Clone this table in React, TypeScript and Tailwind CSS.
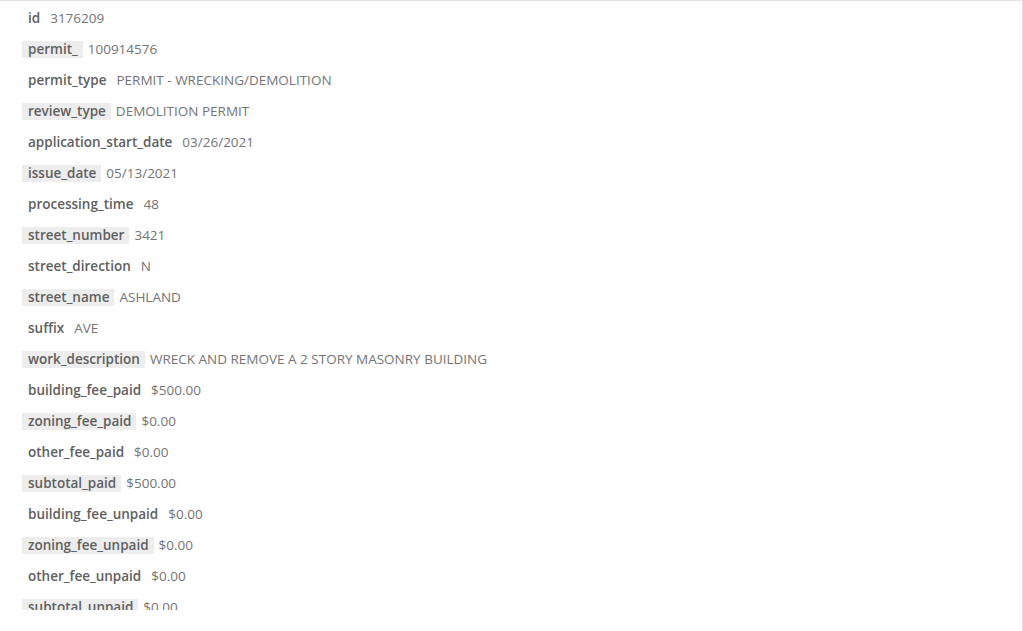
import React from "react";

const rows: [string, string][] = [
  ["id", "3176209"],
  ["permit_", "100914576"],
  ["permit_type", "PERMIT - WRECKING/DEMOLITION"],
  ["review_type", "DEMOLITION PERMIT"],
  ["application_start_date", "03/26/2021"],
  ["issue_date", "05/13/2021"],
  ["processing_time", "48"],
  ["street_number", "3421"],
  ["street_direction", "N"],
  ["street_name", "ASHLAND"],
  ["suffix", "AVE"],
  ["work_description", "WRECK AND REMOVE A 2 STORY MASONRY BUILDING"],
  ["building_fee_paid", "$500.00"],
  ["zoning_fee_paid", "$0.00"],
  ["other_fee_paid", "$0.00"],
  ["subtotal_paid", "$500.00"],
  ["building_fee_unpaid", "$0.00"],
  ["zoning_fee_unpaid", "$0.00"],
  ["other_fee_unpaid", "$0.00"],
  ["subtotal_unpaid", "$0.00"],
];

export default function App() {
  return (
    <div
      className="w-[1023px] h-[631px] bg-white border-t border-r border-[#e3e3e3] overflow-hidden"
      style={{ fontFamily: '"Open Sans", "Noto Sans", sans-serif' }}
    >
      <div className="h-[609px] overflow-hidden pl-[22px] pt-[2px]">
        {rows.map(([k, v], i) => (
          <div key={k} className="h-[31px] flex items-center text-[13.5px] leading-[17px]">
            <span
              className={
                "pl-[6px] pr-[5px] h-[17px] flex items-center font-semibold text-[#606060] " +
                (i % 2 === 1 ? "bg-[#ededed]" : "")
              }
            >
              {k}
            </span>
            <span className="ml-[5px] text-[#747474]">{v}</span>
          </div>
        ))}
      </div>
    </div>
  );
}
